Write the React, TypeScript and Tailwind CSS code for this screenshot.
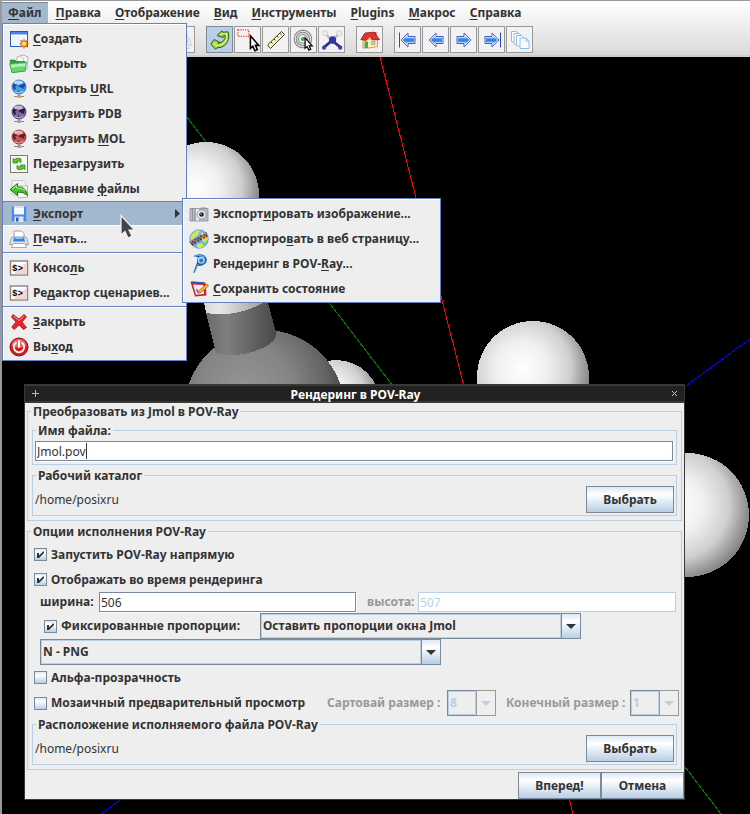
import { useState } from "react";
import type { ReactNode } from "react";

/* ---------- text helpers ---------- */

// "&" marks the mnemonic letter, which is underlined.
function Mnemonic({ text }: { text: string }) {
  const at = text.indexOf("&");
  if (at < 0) return <>{text}</>;
  return (
    <span className="whitespace-pre">
      {text.slice(0, at)}
      <span className="underline decoration-1 underline-offset-2">{text[at + 1]}</span>
      {text.slice(at + 2)}
    </span>
  );
}

function Icon({ children, size = 20 }: { children: ReactNode; size?: number }) {
  return (
    <svg width={size} height={size} viewBox="0 0 20 20" className="shrink-0 overflow-visible" aria-hidden="true">
      {children}
    </svg>
  );
}

/* ---------- menu icons ---------- */

const NewIcon = () => (
  <Icon>
    <rect x="1.5" y="2.5" width="17" height="15" fill="#fff" stroke="#2a55b4" />
    <rect x="2" y="3" width="16" height="2.5" fill="#4f86e6" />
    <path d="M3 6.500h14V15L3 17z" fill="#eef4fd" />
    <path d="M15 10l1 2 2.500-.8-.8 2.500 2 1.100-2 1.100.8 2.300-2.500-.7L15 19.500l-1-2-2.500.7.8-2.300-2-1.100 2-1.100-.8-2.500 2.500.8z" fill="#f08b1d" stroke="#b75c0c" strokeWidth=".4" />
    <circle cx="15" cy="14.800" r="2" fill="#ffe36b" />
  </Icon>
);

const OpenIcon = () => (
  <Icon>
    <path d="M8 3l6-2 5 2-1 12H8z" fill="#fafafa" stroke="#999" strokeWidth=".7" />
    <path d="M11 3l4 1-1 4" fill="none" stroke="#bbb" strokeWidth=".7" />
    <path d="M1 6h5l1 1.500h9V17l-13 1.500z" fill="#27a33e" stroke="#157a29" strokeWidth=".6" />
    <path d="M0.500 9.500L17.500 8l-1.500 9-13 1.700z" fill="#67d672" stroke="#1e9436" strokeWidth=".6" />
    <path d="M2 10.700l14.500-1.300-.5 3Q8 12 2.700 14z" fill="#b9f3b9" />
  </Icon>
);

function GlobeIcon({ body, dark, light, base }: { body: string; dark: string; light: string; base: string }) {
  return (
    <Icon>
      <path d="M5 17.500h10M10 14v3" stroke="#888" strokeWidth="1.200" />
      <rect x="8" y="16" width="4" height="3" rx="1" fill={base} />
      <circle cx="10" cy="8" r="7" fill={body} stroke={dark} strokeWidth=".7" />
      <path d="M3.500 6l2-1.500 3 .5-.5 1.500-2 1 1 1.500-1 2.500-1.500-2zM9.500 7l2-2 4-.5 1.200 2.500-1.700.5.5 2-1.500.5-.5-1.500-1 1-1-1.500-1.500.5zM8.500 11l1.500.5-.5 2z" fill={dark} />
      <ellipse cx="9.500" cy="3.500" rx="4.500" ry="2" fill={light} opacity=".8" />
      <path d="M5.500 12.500Q10 15.500 14.500 12.500" fill="none" stroke={light} opacity=".7" />
    </Icon>
  );
}

const ReloadIcon = () => (
  <Icon>
    <rect x="1.500" y="1.500" width="17" height="17" fill="#f7f7f5" stroke="#777b70" />
    <path d="M4 9V4.500L5.500 5.500Q8.500 3 12 5V8.500Q9.500 6.500 7.500 7.700L8.700 9z" fill="#63c92d" stroke="#2a7a12" strokeWidth=".7" />
    <path d="M16 11v4.500l-1.500-1Q11.500 17 8 15v-3.500q2.500 2 4.500.8L11.300 11z" fill="#63c92d" stroke="#2a7a12" strokeWidth=".7" />
  </Icon>
);

const RecentIcon = () => (
  <Icon>
    <path d="M3 1.500h11l3 3V16H3z" fill="#f4f4f4" stroke="#bbb" strokeWidth=".8" />
    <path d="M9 7h9.500v11.500H9z" fill="#fdfdfd" stroke="#aaa" strokeWidth=".8" />
    <path d="M1 10.500L8.500 4.500V8Q17 7 18.500 16.500 14 12.500 8.500 13V16.500z" fill="#46c228" stroke="#146c08" strokeWidth=".9" />
    <path d="M3 10.200L7.700 6.500V9Q13 8.500 16 11.500" fill="none" stroke="#b5f09c" strokeWidth="1" />
  </Icon>
);

const SaveIcon = () => (
  <Icon>
    <path d="M2.500 2.500h15v15h-15z" fill="#4d87e8" stroke="#86adf0" />
    <rect x="5" y="2" width="10" height="8.500" fill="#f4f8ff" />
    <path d="M5 3h10" stroke="#b6cdf3" />
    <rect x="5.500" y="12.500" width="9" height="5.500" fill="#dbe5f6" />
    <rect x="7" y="13.500" width="2.500" height="4" fill="#2a5bc0" />
  </Icon>
);

const PrintIcon = () => (
  <Icon>
    <path d="M5 9V2h7.500L15 4.500V9z" fill="#fff" stroke="#9aa2ad" />
    <path d="M2 10q0-2 2-2h12q2 0 2 2l1.500 5.500h-19z" fill="#dfe3e8" stroke="#858d97" strokeWidth=".8" />
    <path d="M5 8.500h10l1 4H4z" fill="#2c86e0" />
    <path d="M6.500 8.500h7v1.500h-7z" fill="#7fd0ff" />
    <path d="M4 14.500h12l1.500 4h-15z" fill="#fbfcfd" stroke="#9098a3" strokeWidth=".8" />
  </Icon>
);

const ConsoleIcon = () => (
  <Icon>
    <rect x="1.500" y="3" width="17" height="14" fill="#fff" stroke="#8a8a8a" strokeWidth="1.500" />
    <path d="M17.700 4.500v11.700H4z" fill="#f6d3d0" />
    <text x="3" y="12.500" fontSize="9" fontWeight="700" fontFamily="Liberation Mono, monospace" fill="#000">
      $&gt;
    </text>
  </Icon>
);

const CloseIcon = () => (
  <Icon>
    <path d="M4 2.500L10 7l5-4.500 2.500 2.300L13 10l4.500 5.500-3 2L10 13l-5 4.500L2.800 15 7 10 2.500 5z" fill="#e8262a" stroke="#a50f14" strokeWidth=".8" strokeLinejoin="round" />
    <path d="M4.500 4L10 8.500 15 4" fill="none" stroke="#ff9a97" strokeWidth="1" />
  </Icon>
);

const QuitIcon = () => (
  <Icon>
    <circle cx="10" cy="10" r="9" fill="#d31d22" stroke="#8e1014" />
    <path d="M2.500 9a7.500 7 0 0115 0Q10 12 2.500 9z" fill="#ee6c69" />
    <path d="M6.800 6a5.200 5.200 0 106.400 0" fill="none" stroke="#fff" strokeWidth="1.800" strokeLinecap="round" />
    <path d="M10 4v6" stroke="#fff" strokeWidth="2" strokeLinecap="round" />
  </Icon>
);

const CameraIcon = () => (
  <Icon>
    <path d="M1 4.500h18v12.500H1z" fill="#b9bcc4" stroke="#8b8e98" strokeWidth=".8" />
    <path d="M2 4h3v1H2zM12 3.500h5v1.500h-5z" fill="#8d909a" />
    <path d="M3.500 5v11.500M6 5v11.500" stroke="#8a8d96" strokeWidth=".8" />
    <path d="M7 5h3v11.500H7z" fill="#e7e9ed" />
    <circle cx="12.500" cy="10.500" r="4.500" fill="#e9ebf2" stroke="#8b8e9a" strokeWidth=".8" />
    <circle cx="12.500" cy="10.500" r="2.300" fill="#1b1d3a" />
    <circle cx="12" cy="10" r=".8" fill="#a8b4ff" />
  </Icon>
);

const WebIcon = () => (
  <Icon>
    <circle cx="10" cy="10" r="9.300" fill="#66b6f2" stroke="#4a94d0" strokeWidth=".6" />
    <path d="M3 5Q7 .5 11 1.500L9 6l-5 4-2.500 1Q1 8 3 5zM12 3l5 2 2 5-3 4-4-3zM8 15l5-1 2 3-4 2.200-3-1z" fill="#d3e84f" />
    <text x="10" y="12.500" transform="rotate(-30 10 10)" textAnchor="middle" fontSize="7" fontWeight="700" fontFamily="Liberation Sans, sans-serif" fill="#8d1616">
      WWW
    </text>
  </Icon>
);

const PovIcon = () => (
  <Icon>
    <path d="M4.500 2Q10-1 15.500 1.500q4 4 1 8-4 3.500-8 2l-3 7.500-1.200-.5L8 8.500Q8 5 9 3.500z" fill="#1d5ea8" />
    <circle cx="12.300" cy="6.200" r="3.600" fill="#a9d2f4" />
    <path d="M5 2.500Q11 0 15.500 3" fill="none" stroke="#58a6e6" strokeWidth="1.200" />
    <circle cx="12.300" cy="6.400" r="2" fill="#2b78c8" />
    <path d="M9 10L5.500 18" stroke="#4f9fe0" strokeWidth="1" />
  </Icon>
);

const StateIcon = () => (
  <Icon>
    <path d="M1.500 3l15 .5 1 13-11.500 1z" fill="#c5262c" />
    <path d="M4 5.500l10.500.5.500 9-8 .8z" fill="#f6e9f2" />
    <path d="M2 3l13 1" stroke="#3558b8" strokeWidth="1.300" />
    <path d="M7.500 10l1.500 3.500" stroke="#3558b8" strokeWidth="1.200" />
    <path d="M18 5l1.500 2L12 13.500l-3 .8 1-2.800z" fill="#ffb52c" stroke="#a5560e" strokeWidth=".7" />
  </Icon>
);

/* ---------- toolbar icons ---------- */

const RotateIcon = () => (
  <Icon>
    <path d="M7 5.500L12 .8l.6 1.400L18 1.800Q20.500 8.500 15.500 14.500 11.500 18.300 7 17.800L5.500 19.300.8 14 4 9.500l5.500 2.700L8 13.500Q12.500 13 15 8.500L15 5.500 13.300 5.800 13 7.500z" fill="#a9d64a" stroke="#1e6312" strokeLinejoin="round" />
    <path d="M4 12.500L5 15Q13 17 16.700 9.500L16.800 3.500 10.500 4" fill="none" stroke="#e4f58a" strokeWidth="1.100" />
  </Icon>
);

const PickIcon = () => (
  <Icon size={24}>
    <rect x="1.500" y="1.500" width="9" height="5.500" fill="none" stroke="#f33" strokeDasharray="1 1" strokeWidth="1" />
    <path d="M12 6.500v10.500l2-1.700 1.800 3.700 2-1-1.600-3.500h2.800z" fill="#fff" stroke="#000" strokeWidth="1.300" />
  </Icon>
);

const RulerIcon = () => (
  <Icon>
    <path d="M1.500 15L15.500 1.500l3 3L4.500 18.500z" fill="#fbf8b4" stroke="#222" strokeWidth=".9" />
    <path d="M5 12l1.500 1.500M8 9l1.500 1.500M11 6l1.500 1.500M14 3.500l1.500 1.500" stroke="#222" strokeWidth=".9" />
  </Icon>
);

const CenterIcon = () => (
  <Icon size={22}>
    <circle cx="9" cy="9" r="8" fill="#e4e4e4" stroke="#888" />
    <circle cx="9" cy="9" r="6" fill="none" stroke="#888" />
    <circle cx="9" cy="9" r="4" fill="#f2f2f2" stroke="#888" />
    <circle cx="9" cy="9" r="1.800" fill="#2bb52b" />
    <path d="M11 8v9.500l1.800-1.500 1.600 3.200 1.700-.9-1.400-3h2.800z" fill="#fff" stroke="#000" strokeWidth="1.100" />
  </Icon>
);

const AtomsIcon = () => (
  <Icon size={22}>
    <path d="M4 4l6 6.500L16.500 4" fill="none" stroke="#bbb" strokeWidth="2" />
    <path d="M10 10.500L3 16.500M10 10.500l7.500 6" stroke="#2b3190" strokeWidth="2.500" />
    <circle cx="3.800" cy="3.800" r="2.300" fill="#eee" stroke="#bbb" strokeWidth=".6" />
    <circle cx="16.500" cy="3.800" r="2.300" fill="#eee" stroke="#bbb" strokeWidth=".6" />
    <circle cx="10.500" cy="10" r="3.300" fill="#2f36a0" />
    <circle cx="2.800" cy="17" r="1.900" fill="#3940ac" />
    <circle cx="17.500" cy="17" r="1.900" fill="#3940ac" />
  </Icon>
);

const HomeIcon = () => (
  <Icon>
    <path d="M3 9h14.500v7.500L9 18H3z" fill="#fbeeba" stroke="#c08a4a" strokeWidth=".8" />
    <path d="M14 2h2.500v3H14z" fill="#c33" />
    <path d="M.8 9.500L5 3l9-.8 5.500 7.300-7 .5L10 6.500 6 10.500z" fill="#e2362a" stroke="#941510" strokeWidth=".8" />
    <path d="M4.500 11.500H8V18H4.500z" fill="#4cab44" />
    <path d="M11.500 11.500h3.500v3h-3.500z" fill="#a9cff6" stroke="#c08a4a" strokeWidth=".6" />
  </Icon>
);

function StepIcon({ flip = false, bar = false }: { flip?: boolean; bar?: boolean }) {
  return (
    <Icon>
      <defs>
        <linearGradient id="stepFill" x1="0" y1="0" x2="0" y2="1">
          <stop offset="0" stopColor="#c4e4ff" />
          <stop offset=".5" stopColor="#2478e0" />
          <stop offset="1" stopColor="#9ad2ff" />
        </linearGradient>
      </defs>
      <g transform={flip ? "matrix(-1 0 0 1 20 0)" : undefined}>
        {bar && <path d="M1.500 2.500v15" stroke="#3048b8" />}
        <path d="M3 10L10 3.200V6.500h7v7H10V16.800z" fill="#fff" stroke="#3048b8" strokeWidth=".9" />
        <path d="M4.600 10L9.200 5.500V7.500h6.800v5H9.200v2z" fill="url(#stepFill)" />
      </g>
    </Icon>
  );
}

const FramesIcon = () => (
  <Icon>
    <path d="M1.500 1.500H6l2 1.500v8.500H1.500z" fill="#fff" stroke="#8fbdea" />
    <path d="M4 3.500h5l2 1.500v9H4z" fill="#fff" stroke="#8fbdea" />
    <path d="M6.500 5.500h5l2 1.500v9h-7z" fill="#fff" stroke="#8fbdea" />
    <path d="M10 8h6l3 3v7.500h-9z" fill="#f6faff" stroke="#8fbdea" />
    <path d="M16 8v3h3" fill="none" stroke="#8fbdea" />
  </Icon>
);

/* ---------- menus ---------- */

type Entry = { label: string; icon: ReactNode; submenu?: boolean } | null;

const menuBar = ["&Файл", "&Правка", "&Отображение", "&Вид", "&Инструменты", "&Plugins", "&Макрос", "&Справка"];

const fileMenu: Entry[] = [
  { label: "&Создать", icon: <NewIcon /> },
  { label: "&Открыть", icon: <OpenIcon /> },
  { label: "Открыть &URL", icon: <GlobeIcon body="#4b9fe8" dark="#14539c" light="#c8e6ff" base="#f09a3c" /> },
  { label: "&Загрузить PDB", icon: <GlobeIcon body="#7d6b9e" dark="#2c1c4c" light="#d6cbe8" base="#a79ab8" /> },
  { label: "Загрузить &MOL", icon: <GlobeIcon body="#c05a5a" dark="#741a1e" light="#f0c6c4" base="#c98a8a" /> },
  { label: "Пе&резагрузить", icon: <ReloadIcon /> },
  { label: "Недавние &файлы", icon: <RecentIcon /> },
  { label: "&Экспорт", icon: <SaveIcon />, submenu: true },
  { label: "&Печать...", icon: <PrintIcon /> },
  null,
  { label: "Консо&ль", icon: <ConsoleIcon /> },
  { label: "Ре&дактор сценариев...", icon: <ConsoleIcon /> },
  null,
  { label: "&Закрыть", icon: <CloseIcon /> },
  { label: "Вы&ход", icon: <QuitIcon /> },
];

const exportMenu: Entry[] = [
  { label: "Экспорт&ировать изображение...", icon: <CameraIcon /> },
  { label: "Экспортиро&вать в веб страницу...", icon: <WebIcon /> },
  { label: "Рендеринг в POV-&Ray...", icon: <PovIcon /> },
  { label: "&Сохранить состояние", icon: <StateIcon /> },
];

function PopupMenu({ entries, className }: { entries: Entry[]; className: string }) {
  return (
    <div role="menu" className={`absolute flex flex-col border border-[#6382bf] bg-[#eee] pt-0.5 pb-px shadow-[inset_1px_1px_0_#fff] ${className}`}>
      {entries.map((entry, i) =>
        entry === null ? (
          <div key={i} role="separator" className="my-px h-0.5 border-t border-b border-t-[#6382bf] border-b-white" />
        ) : (
          <button
            key={i}
            type="button"
            role="menuitem"
            className={`flex h-[25px] items-center gap-1 px-1.5 text-left ${
              entry.submenu ? "border-t border-b border-t-[#6382bf] border-b-white bg-[#a3b8cc]" : ""
            }`}
          >
            {entry.icon}
            <span className="flex-1">
              <Mnemonic text={entry.label} />
            </span>
            {entry.submenu && (
              <svg width="5" height="9" aria-hidden="true">
                <path d="M0 0l5 4.500L0 9z" fill="#333" />
              </svg>
            )}
          </button>
        ),
      )}
    </div>
  );
}

/* ---------- toolbar ---------- */

function ToolButton({ name, active, children }: { name: string; active?: boolean; children: ReactNode }) {
  return (
    <button
      type="button"
      aria-label={name}
      className={`flex size-[27px] shrink-0 items-center justify-center border ${
        active ? "border-[#7a8a99] bg-[#b8cfe5]" : "border-[#999] bg-[#f2f2f2]"
      }`}
    >
      {children}
    </button>
  );
}

function Toolbar() {
  return (
    <div role="toolbar" className="flex h-[31px] items-center gap-[11px] pl-[166px]">
      <ToolButton name="Печать">
        <span className="opacity-40 grayscale">
          <PrintIcon />
        </span>
      </ToolButton>
      <div className="flex gap-px">
        <ToolButton name="Вращение" active>
          <RotateIcon />
        </ToolButton>
        <ToolButton name="Выделение">
          <PickIcon />
        </ToolButton>
        <ToolButton name="Измерение">
          <RulerIcon />
        </ToolButton>
        <ToolButton name="Центр">
          <CenterIcon />
        </ToolButton>
        <ToolButton name="Атомы">
          <AtomsIcon />
        </ToolButton>
      </div>
      <ToolButton name="Домой">
        <HomeIcon />
      </ToolButton>
      <div className="flex gap-px">
        <ToolButton name="Первый">
          <StepIcon bar />
        </ToolButton>
        <ToolButton name="Предыдущий">
          <StepIcon />
        </ToolButton>
        <ToolButton name="Следующий">
          <StepIcon flip />
        </ToolButton>
        <ToolButton name="Последний">
          <StepIcon flip bar />
        </ToolButton>
        <ToolButton name="Все кадры">
          <FramesIcon />
        </ToolButton>
      </div>
    </div>
  );
}

/* ---------- molecule ---------- */

function Molecule() {
  return (
    <svg className="absolute inset-0 h-full w-full" aria-hidden="true">
      <defs>
        <radialGradient id="hydrogen" cx=".4" cy=".42" r=".67">
          <stop offset="0" stopColor="#fff" />
          <stop offset=".35" stopColor="#f0f0f0" />
          <stop offset=".65" stopColor="#cfcfcf" />
          <stop offset=".88" stopColor="#8e8e8e" />
          <stop offset="1" stopColor="#707070" />
        </radialGradient>
        <radialGradient id="carbon" cx=".38" cy=".38" r=".65">
          <stop offset="0" stopColor="#959595" />
          <stop offset=".45" stopColor="#858585" />
          <stop offset=".8" stopColor="#626262" />
          <stop offset="1" stopColor="#3c3c3c" />
        </radialGradient>
        <linearGradient id="bond" x1="0" y1="0" x2="1" y2="0">
          <stop offset="0" stopColor="#6a6a6a" />
          <stop offset=".3" stopColor="#7f7f7f" />
          <stop offset="1" stopColor="#484848" />
        </linearGradient>
        <linearGradient id="bondEnd" x1="0" y1="0" x2="1" y2="0">
          <stop offset="0" stopColor="#d0d0d0" />
          <stop offset=".3" stopColor="#e8e8e8" />
          <stop offset="1" stopColor="#a0a0a0" />
        </linearGradient>
      </defs>
      <g transform="translate(-2 -57)" shapeRendering="crispEdges">
        <path d="M186 116L721 814" stroke="#008000" />
        <path d="M380 57L573 814" stroke="#f00" />
        <path d="M750 339L101 814" stroke="#00f" />
        <circle cx="206" cy="195" r="53" fill="url(#hydrogen)" />
        <circle cx="336" cy="404" r="44" fill="url(#hydrogen)" />
        <circle cx="264.500" cy="410" r="80" fill="url(#carbon)" />
        <path d="M200 280L206 313Q235 318 263 303L260 280z" fill="url(#bondEnd)" />
        <path d="M206 313Q235 318 263 303H268L276 332Q278 344 252 352 230 358 216 353z" fill="url(#bond)" />
        <circle cx="533" cy="377" r="56" fill="url(#hydrogen)" />
        <circle cx="687" cy="515" r="62" fill="url(#hydrogen)" />
      </g>
    </svg>
  );
}

/* ---------- dialog controls ---------- */

const raised = "bg-linear-to-b from-[#dde8f3] via-white via-30% to-[#b8cfe5]";

function PushButton({ children, className }: { children: ReactNode; className: string }) {
  return (
    <button type="button" className={`h-[27px] shrink-0 border border-[#7a8a99] ${raised} ${className}`}>
      {children}
    </button>
  );
}

function Group({ title, className, children }: { title: string; className: string; children: ReactNode }) {
  return (
    <fieldset className={`min-w-0 border border-[#b8cfe5] ${className}`}>
      <legend className="ml-[3px] h-[17px] px-0.5 leading-[17px]">{title}</legend>
      {children}
    </fieldset>
  );
}

function CheckBox({ label, initial = false }: { label: string; initial?: boolean }) {
  const [on, setOn] = useState(initial);
  return (
    <label className="flex items-center gap-1">
      <span className="grid size-[13px] shrink-0">
        <input
          type="checkbox"
          checked={on}
          onChange={(e) => setOn(e.target.checked)}
          className={`peer col-start-1 row-start-1 size-[13px] appearance-none border border-[#7a8a99] ${raised}`}
        />
        <svg viewBox="0 0 13 13" className="pointer-events-none invisible col-start-1 row-start-1 size-[13px] peer-checked:visible" aria-hidden="true">
          <path d="M3 5h2v2.500L9 3.500h1V5L5 10H3z" fill="#333" />
        </svg>
      </span>
      <span className="whitespace-nowrap">{label}</span>
    </label>
  );
}

function Combo({ label, value, disabled, className }: { label: string; value: string; disabled?: boolean; className: string }) {
  return (
    <span className={`grid h-[26px] ${className}`}>
      <select
        aria-label={label}
        disabled={disabled}
        className={`col-start-1 row-start-1 w-full appearance-none border border-[#7a8a99] bg-[#eee] pr-5 pl-0.5 ${
          disabled ? "text-[#b8cfe5] opacity-100" : "text-[#333]"
        }`}
      >
        <option>{value}</option>
      </select>
      <span className="pointer-events-none col-start-1 row-start-1 m-px mr-5 border border-[#b8cfe5]" />
      <span
        className={`pointer-events-none col-start-1 row-start-1 flex w-5 items-center justify-center justify-self-end border ${
          disabled ? "border-[#999] bg-[#eee]" : `border-[#7a8a99] ${raised}`
        }`}
      >
        <svg width="10" height="5" className="shrink-0" aria-hidden="true">
          <path d="M0 0h10L5 5z" fill={disabled ? "#b8cfe5" : "#333"} />
        </svg>
      </span>
    </span>
  );
}

const field = "h-5 min-w-0 border bg-white px-px font-normal outline-none";

function FolderRow() {
  return (
    <div className="flex items-center justify-between p-0.5">
      <span className="font-normal">/home/posixru</span>
      <PushButton className="w-[88px]">Выбрать</PushButton>
    </div>
  );
}

function RenderDialog() {
  return (
    <section
      role="dialog"
      aria-labelledby="dialog-title"
      className="absolute top-[384px] right-[65px] left-6 flex flex-col border border-[#383838] bg-[#eee]"
    >
      <header className="flex h-[18px] items-center justify-between border-t border-b-2 border-[#383838] bg-[#222] px-1.5 text-white">
        <button type="button" aria-label="Меню окна">
          <svg width="9" height="9" aria-hidden="true">
            <path d="M4.500 1v7M1 4.500h7" stroke="#8fd88f" />
          </svg>
        </button>
        <h2 id="dialog-title" className="pt-0.5">
          Рендеринг в POV-Ray
        </h2>
        <button type="button" aria-label="Закрыть окно">
          <svg width="7" height="7" aria-hidden="true">
            <path d="M1 1l5 5M6 1L1 6" stroke="#8fe88f" />
          </svg>
        </button>
      </header>

      <form className="flex flex-col" onSubmit={(e) => e.preventDefault()}>
        <div className="flex flex-col gap-0.5 px-0.5">
          <Group title="Преобразовать из Jmol в POV-Ray" className="pb-1">
            <div className="flex flex-col gap-0.5 px-1 pt-0.5">
              <Group title="Имя файла:" className="">
                <div className="relative flex pt-0.5 pr-[3px] pb-[3px] pl-0.5">
                  <input aria-label="Имя файла" defaultValue="Jmol.pov" className={`${field} w-full border-[#7a8a99] shadow-[1px_1px_0_#fff]`} />
                  <span className="absolute top-1 left-[53px] h-4 w-px bg-[#333]" />
                </div>
              </Group>
              <Group title="Рабочий каталог" className="">
                <FolderRow />
              </Group>
            </div>
          </Group>

          <Group title="Опции исполнения POV-Ray" className="pb-1">
            <div className="flex flex-col pt-0.5">
              <div className="flex h-[25px] items-center pl-1.5">
                <CheckBox label="Запустить POV-Ray напрямую" initial />
              </div>
              <div className="flex h-[25px] items-center pl-1.5">
                <CheckBox label="Отображать во время рендеринга" initial />
              </div>
              <div className="flex h-[21px] items-start gap-[11px] pr-[5px] pl-3">
                <label className="flex min-w-0 grow basis-[7px] items-center gap-0.5">
                  <span className="w-[57px] shrink-0">ширина:</span>
                  <input defaultValue="506" className={`${field} flex-1 border-[#7a8a99] shadow-[1px_1px_0_#fff]`} />
                </label>
                <label className="flex min-w-0 grow basis-0 items-center gap-0.5 text-[#999]">
                  <span className="w-[49px] shrink-0">высота:</span>
                  <input defaultValue="507" disabled className={`${field} flex-1 border-[#b8cfe5] text-[#b8cfe5]`} />
                </label>
              </div>
              <div className="flex items-center pl-4">
                <div className="w-[216px] shrink-0">
                  <CheckBox label="Фиксированные пропорции:" initial />
                </div>
                <Combo label="Пропорции" value="Оставить пропорции окна Jmol" className="w-[321px]" />
              </div>
              <div className="flex pl-3">
                <Combo label="Формат" value="N - PNG" className="w-[401px]" />
              </div>
              <div className="flex h-[25px] items-center pl-1.5">
                <CheckBox label="Альфа-прозрачность" />
              </div>
              <div className="flex items-center justify-between pr-0.5 pl-1.5">
                <CheckBox label="Мозаичный предварительный просмотр" />
                <div className="flex items-center gap-2.5 whitespace-nowrap text-[#999]">
                  <span className="flex items-center gap-[3px]">
                    <span className="w-[117px]">Сартовай размер :</span>
                    <Combo label="Сартовай размер" value="8" disabled className="w-[49px]" />
                  </span>
                  <span className="flex items-center gap-[3px]">
                    <span className="w-[121px]">Конечный размер :</span>
                    <Combo label="Конечный размер" value="1" disabled className="w-[49px]" />
                  </span>
                </div>
              </div>
              <div className="px-1">
                <Group title="Расположение исполняемого файла POV-Ray" className="">
                  <FolderRow />
                </Group>
              </div>
            </div>
          </Group>
        </div>
        <div className="flex justify-end pt-0.5">
          <PushButton className="w-[83px]">Вперед!</PushButton>
          <PushButton className="w-[83px]">Отмена</PushButton>
        </div>
      </form>
    </section>
  );
}

/* ---------- page ---------- */

export default function App() {
  return (
    <div className="relative flex min-h-screen flex-col overflow-hidden border-t border-l-2 border-[#999] bg-black font-['Noto_Sans',sans-serif] text-[12px] leading-4 font-bold text-[#333]">
      <div className="border-b-2 border-[#ccc] bg-linear-to-b from-white to-[#dadada]">
        <nav className="flex h-[23px] gap-0.5 pt-px">
          {menuBar.map((item, i) => (
            <button key={item} type="button" className={`px-1.5 whitespace-nowrap ${i === 0 ? "bg-[#a3b8cc] shadow-[inset_0_1px_0_#7a8a99]" : ""}`}>
              <Mnemonic text={item} />
            </button>
          ))}
        </nav>
        <Toolbar />
      </div>
      <main className="relative min-h-[757px] flex-1">
        <Molecule />
      </main>

      <RenderDialogLayer />
      <PopupMenu entries={fileMenu} className="top-[22px] left-0 w-[185px]" />
      <PopupMenu entries={exportMenu} className="top-[197px] left-[180px] w-[259px]" />
      <svg width="16" height="26" className="pointer-events-none absolute top-[213px] left-[117px]" aria-hidden="true">
        <path d="M2 1.500V21l4-3.500 3 6.500 4-2-3-6h5.500z" fill="#444" stroke="#f4f4f4" strokeWidth="1.200" />
      </svg>
    </div>
  );
}

// Spans the whole window so that the dialog is placed from the screen's own edges.
function RenderDialogLayer() {
  return (
    <div className="pointer-events-none absolute -top-px right-0 bottom-0 -left-0.5">
      <div className="pointer-events-auto">
        <RenderDialog />
      </div>
    </div>
  );
}
